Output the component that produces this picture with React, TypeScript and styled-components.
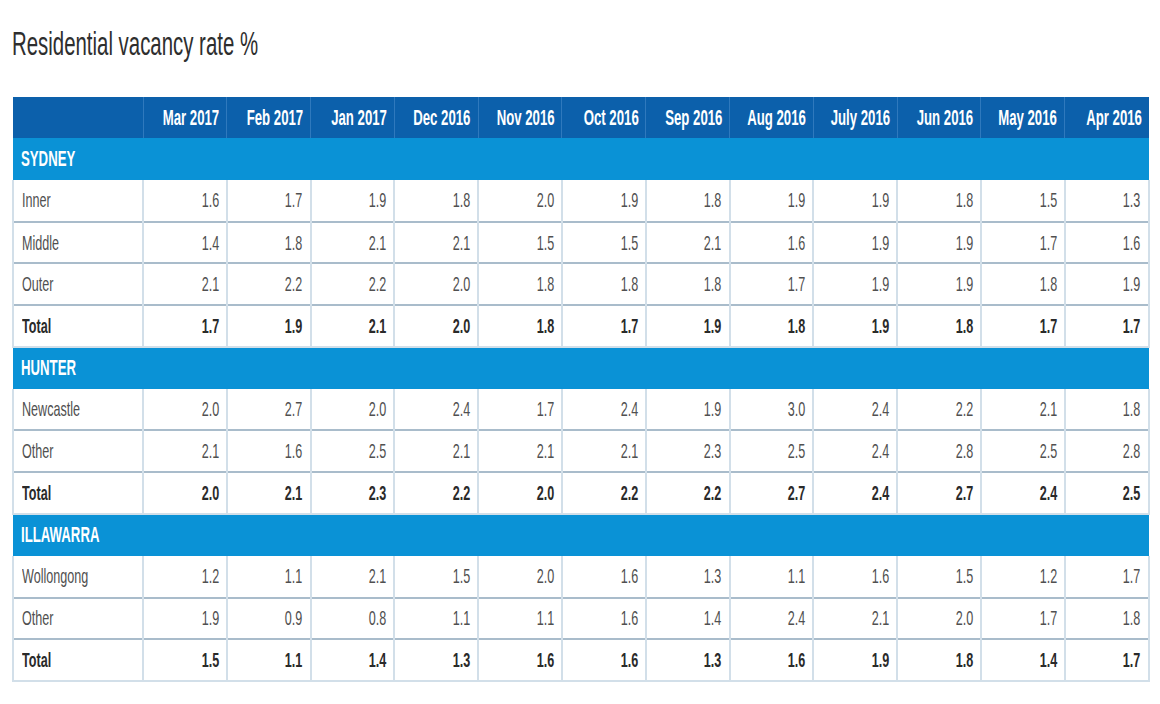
import React from 'react';
import styled, { createGlobalStyle } from 'styled-components';

const GlobalStyle = createGlobalStyle`
  html, body {
    margin: 0;
    padding: 0;
    background: #ffffff;
  }
  body {
    font-family: "Liberation Sans", Arial, sans-serif;
  }
`;

const months = [
  'Mar 2017', 'Feb 2017', 'Jan 2017', 'Dec 2016', 'Nov 2016', 'Oct 2016',
  'Sep 2016', 'Aug 2016', 'July 2016', 'Jun 2016', 'May 2016', 'Apr 2016',
];

interface Line {
  label: string;
  values: string[];
  total?: boolean;
}

interface Region {
  name: string;
  lines: Line[];
}

const regions: Region[] = [
  {
    name: 'SYDNEY',
    lines: [
      { label: 'Inner', values: ['1.6', '1.7', '1.9', '1.8', '2.0', '1.9', '1.8', '1.9', '1.9', '1.8', '1.5', '1.3'] },
      { label: 'Middle', values: ['1.4', '1.8', '2.1', '2.1', '1.5', '1.5', '2.1', '1.6', '1.9', '1.9', '1.7', '1.6'] },
      { label: 'Outer', values: ['2.1', '2.2', '2.2', '2.0', '1.8', '1.8', '1.8', '1.7', '1.9', '1.9', '1.8', '1.9'] },
      { label: 'Total', total: true, values: ['1.7', '1.9', '2.1', '2.0', '1.8', '1.7', '1.9', '1.8', '1.9', '1.8', '1.7', '1.7'] },
    ],
  },
  {
    name: 'HUNTER',
    lines: [
      { label: 'Newcastle', values: ['2.0', '2.7', '2.0', '2.4', '1.7', '2.4', '1.9', '3.0', '2.4', '2.2', '2.1', '1.8'] },
      { label: 'Other', values: ['2.1', '1.6', '2.5', '2.1', '2.1', '2.1', '2.3', '2.5', '2.4', '2.8', '2.5', '2.8'] },
      { label: 'Total', total: true, values: ['2.0', '2.1', '2.3', '2.2', '2.0', '2.2', '2.2', '2.7', '2.4', '2.7', '2.4', '2.5'] },
    ],
  },
  {
    name: 'ILLAWARRA',
    lines: [
      { label: 'Wollongong', values: ['1.2', '1.1', '2.1', '1.5', '2.0', '1.6', '1.3', '1.1', '1.6', '1.5', '1.2', '1.7'] },
      { label: 'Other', values: ['1.9', '0.9', '0.8', '1.1', '1.1', '1.6', '1.4', '2.4', '2.1', '2.0', '1.7', '1.8'] },
      { label: 'Total', total: true, values: ['1.5', '1.1', '1.4', '1.3', '1.6', '1.6', '1.3', '1.6', '1.9', '1.8', '1.4', '1.7'] },
    ],
  },
];

const Page = styled.div`
  padding: 22px 12px 24px 12px;
`;

const Title = styled.h1`
  margin: 0 0 24px 0;
  height: 51px;
  font-size: 34px;
  line-height: 42px;
  font-weight: normal;
  color: #2e2e2e;
  white-space: nowrap;
`;

// condensed look: the source table is squeezed horizontally
const Squeeze = styled.span<{ $origin: 'left' | 'right' }>`
  display: inline-block;
  flex-shrink: 0;
  white-space: nowrap;
  transform: scaleX(0.6);
  transform-origin: ${(p) => p.$origin} center;
`;

const RightAlign = styled.div`
  display: flex;
  justify-content: flex-end;
  align-items: center;
  overflow: visible;
`;

const Table = styled.table`
  width: 1136px;
  border-collapse: collapse;
  table-layout: fixed;
`;

const LabelCol = styled.col`
  width: 130px;
`;

const MonthCol = styled.col`
  width: 83.8px;
`;

const HeadRow = styled.tr`
  height: 41px;
  background: #0c60ab;
`;

const HeadCell = styled.th`
  padding: 0 7px 0 0;
  color: #ffffff;
  font-size: 22px;
  font-weight: bold;
  border-left: 1px solid #2f79bd;
  &:first-child {
    border-left: none;
  }
`;

const SectionRow = styled.tr`
  height: 42px;
  background: #0a92d6;
`;

const SectionCell = styled.td`
  padding: 0 0 0 8px;
  color: #ffffff;
  font-size: 22px;
  font-weight: bold;
  text-align: left;
`;

const DataRow = styled.tr`
  height: 41.7px;
  background: #ffffff;
  & + & {
    border-top: 2px solid #a9bccb;
  }
`;

const LabelCell = styled.td<{ $total?: boolean }>`
  padding: 0 0 0 8px;
  text-align: left;
  font-size: 21px;
  font-weight: ${(p) => (p.$total ? 'bold' : 'normal')};
  color: ${(p) => (p.$total ? '#2a2a2a' : '#505050')};
  border-left: 2px solid #d2dfe9;
`;

const ValueCell = styled.td<{ $total?: boolean }>`
  padding: 0 7px 0 0;
  font-size: 21px;
  font-weight: ${(p) => (p.$total ? 'bold' : 'normal')};
  color: ${(p) => (p.$total ? '#2a2a2a' : '#505050')};
  border-left: 2px solid #d2dfe9;
  &:last-child {
    border-right: 2px solid #d2dfe9;
  }
`;

const Group = styled.tbody`
  & > tr:last-child {
    border-bottom: 2px solid #d2dfe9;
  }
`;

export default function App() {
  return (
    <Page>
      <GlobalStyle />
      <Title>
        <Squeeze $origin="left">Residential vacancy rate %</Squeeze>
      </Title>
      <Table>
        <colgroup>
          <LabelCol />
          {months.map((m) => (
            <MonthCol key={m} />
          ))}
        </colgroup>
        <thead>
          <HeadRow>
            <HeadCell />
            {months.map((m) => (
              <HeadCell key={m}>
                <RightAlign>
                  <Squeeze $origin="right">{m}</Squeeze>
                </RightAlign>
              </HeadCell>
            ))}
          </HeadRow>
        </thead>
        {regions.map((r) => (
          <Group key={r.name}>
            <SectionRow>
              <SectionCell colSpan={13}>
                <Squeeze $origin="left">{r.name}</Squeeze>
              </SectionCell>
            </SectionRow>
            {r.lines.map((line, i) => (
              <DataRow key={i}>
                <LabelCell $total={line.total}>
                  <Squeeze $origin="left">{line.label}</Squeeze>
                </LabelCell>
                {line.values.map((v, j) => (
                  <ValueCell key={j} $total={line.total}>
                    <RightAlign>
                      <Squeeze $origin="right">{v}</Squeeze>
                    </RightAlign>
                  </ValueCell>
                ))}
              </DataRow>
            ))}
          </Group>
        ))}
      </Table>
    </Page>
  );
}
